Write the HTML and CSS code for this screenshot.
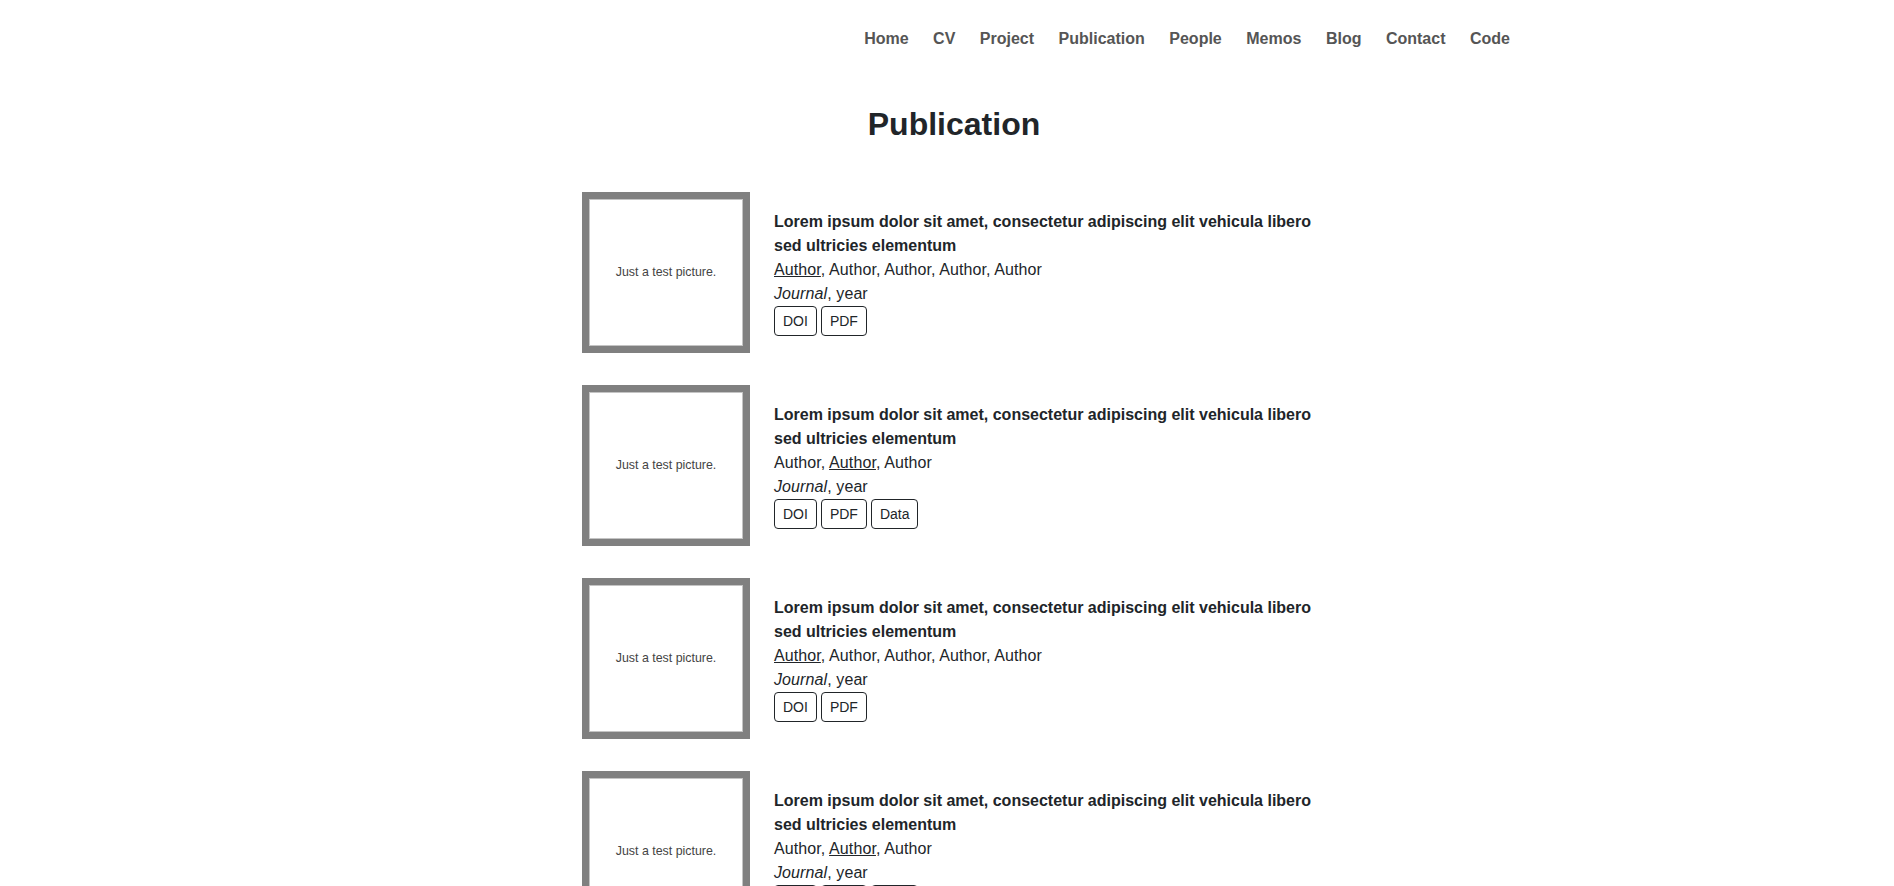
FILE: index.html
```html
<!DOCTYPE html>
<html lang="en">
<head>
<meta charset="utf-8">
<title>Publication</title>
<link rel="stylesheet" href="styles.css">
</head>
<body>
<header class="header">
  <nav class="nav">
    <a href="#">Home</a>
    <a href="#">CV</a>
    <a href="#">Project</a>
    <a href="#">Publication</a>
    <a href="#">People</a>
    <a href="#">Memos</a>
    <a href="#">Blog</a>
    <a href="#">Contact</a>
    <a href="#">Code</a>
  </nav>
</header>
<main class="main">
  <h1 class="page-title">Publication</h1>
  <ul class="pubs">
    <li class="pub">
      <div class="thumb">Just a test picture.</div>
      <div class="info">
        <div class="pub-title">Lorem ipsum dolor sit amet, consectetur adipiscing elit vehicula libero sed ultricies elementum</div>
        <div class="authors"><span class="me">Author</span>, Author, Author, Author, Author</div>
        <div class="venue"><em>Journal</em>, year</div>
        <div class="links"><a class="btn" href="#">DOI</a> <a class="btn" href="#">PDF</a></div>
      </div>
    </li>
    <li class="pub">
      <div class="thumb">Just a test picture.</div>
      <div class="info">
        <div class="pub-title">Lorem ipsum dolor sit amet, consectetur adipiscing elit vehicula libero sed ultricies elementum</div>
        <div class="authors">Author, <span class="me">Author</span>, Author</div>
        <div class="venue"><em>Journal</em>, year</div>
        <div class="links"><a class="btn" href="#">DOI</a> <a class="btn" href="#">PDF</a> <a class="btn" href="#">Data</a></div>
      </div>
    </li>
    <li class="pub">
      <div class="thumb">Just a test picture.</div>
      <div class="info">
        <div class="pub-title">Lorem ipsum dolor sit amet, consectetur adipiscing elit vehicula libero sed ultricies elementum</div>
        <div class="authors"><span class="me">Author</span>, Author, Author, Author, Author</div>
        <div class="venue"><em>Journal</em>, year</div>
        <div class="links"><a class="btn" href="#">DOI</a> <a class="btn" href="#">PDF</a></div>
      </div>
    </li>
    <li class="pub">
      <div class="thumb">Just a test picture.</div>
      <div class="info">
        <div class="pub-title">Lorem ipsum dolor sit amet, consectetur adipiscing elit vehicula libero sed ultricies elementum</div>
        <div class="authors">Author, <span class="me">Author</span>, Author</div>
        <div class="venue"><em>Journal</em>, year</div>
        <div class="links"><a class="btn" href="#">DOI</a> <a class="btn" href="#">PDF</a> <a class="btn" href="#">Data</a></div>
      </div>
    </li>
  </ul>
</main>
</body>
</html>
```

FILE: styles.css
```css
html, body {
  margin: 0;
  background: #fff;
}
body {
  padding: 0 0 0 14px;
  font-family: "Liberation Sans", Arial, sans-serif;
  font-size: 16px;
  line-height: 24px;
  color: #212529;
}
.header {
  width: 1112px;
  margin: 0 auto;
  padding-top: 26px;
}
.nav {
  display: flex;
  justify-content: flex-end;
  gap: 24.5px;
  line-height: 25px;
}
.nav a {
  color: #555;
  font-weight: bold;
  text-decoration: none;
}
.main {
  width: 744px;
  margin: 0 auto;
}
.page-title {
  margin: 54px 0 0;
  font-size: 32px;
  line-height: 38px;
  font-weight: bold;
  text-align: center;
  color: #212529;
}
.pubs {
  list-style: none;
  margin: 49px 0 0;
  padding: 0;
}
.pub {
  display: flex;
  align-items: center;
  gap: 24px;
  margin-bottom: 32px;
}
.thumb {
  flex: 0 0 auto;
  width: 168px;
  height: 161px;
  box-sizing: border-box;
  border: 7px solid #808080;
  box-shadow: inset 0 0 0 1px #c4c4c4;
  display: flex;
  align-items: center;
  justify-content: center;
  padding-bottom: 2px;
  font-size: 12.4px;
  color: #444;
}
.info {
  flex: 1 1 auto;
  min-width: 0;
}
.pub-title {
  font-weight: bold;
}
.authors,
.venue {
  letter-spacing: 0.1px;
}
.me {
  text-decoration: underline;
}
.links {
  line-height: 30px;
  font-size: 0;
  display: flex;
  gap: 4px;
}
.btn {
  display: inline-block;
  box-sizing: border-box;
  height: 30px;
  padding: 0 8px;
  border: 1px solid #212529;
  border-radius: 4px;
  font-size: 14px;
  line-height: 28px;
  color: #212529;
  text-decoration: none;
}
```
